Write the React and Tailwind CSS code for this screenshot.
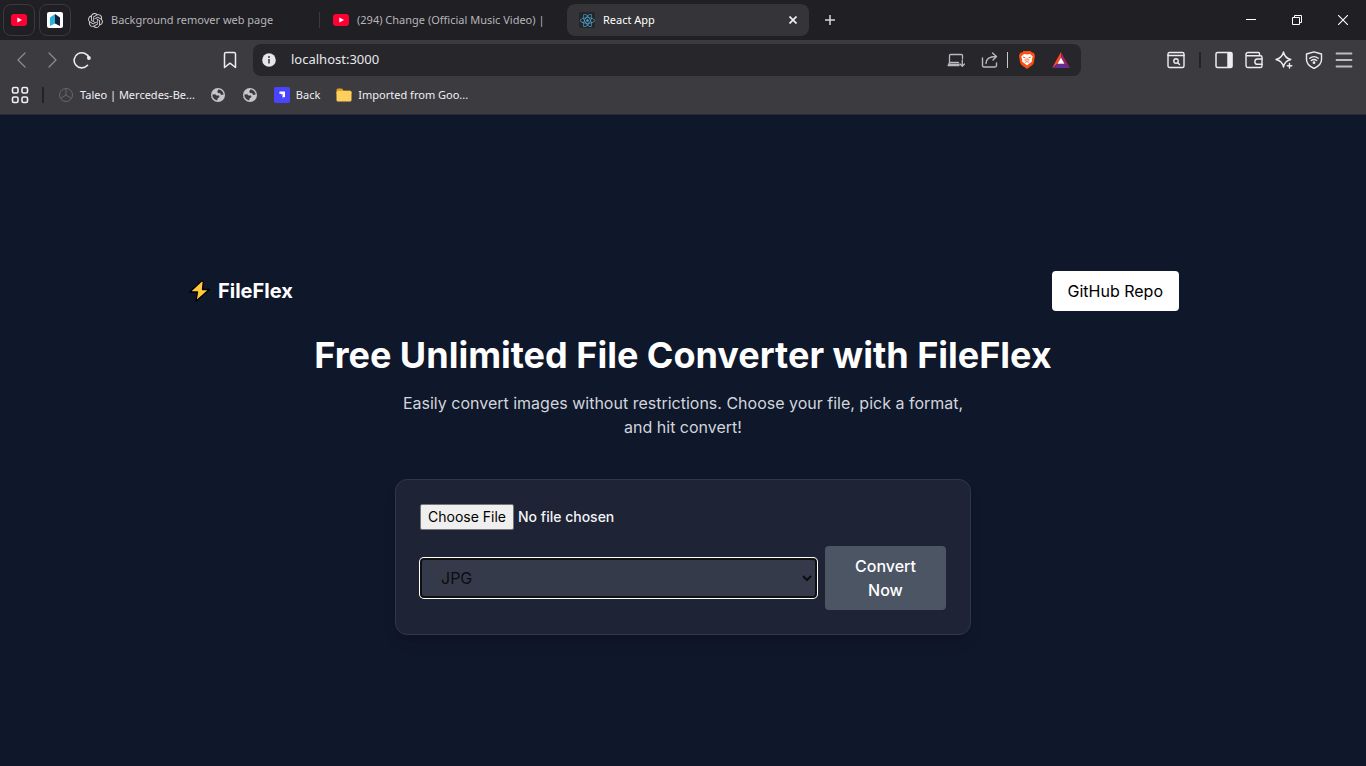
import React from "react";
import { SiOpenai } from "react-icons/si";
import { FaReact } from "react-icons/fa";

function YouTubeIcon() {
  return (
    <svg width="16" height="12" viewBox="0 0 16 12" className="shrink-0" aria-hidden="true">
      <rect width="16" height="12" rx="3" fill="#ff0033" />
      <path d="M6.3 3.4 11 6 6.3 8.6Z" fill="#fff" />
    </svg>
  );
}

function BookIcon() {
  return (
    <svg width="16" height="16" viewBox="0 0 16 16" aria-hidden="true">
      <rect width="16" height="16" rx="2" fill="#fff" />
      <path d="M3 5.5 8 2v9.5L3 14Z" fill="#27b4d8" />
      <path d="M8 2l5 3.5V14l-5-2.5Z" fill="#14213d" />
    </svg>
  );
}

function Stroke({ children, size = 18, width = 1.3, className = "" }) {
  return (
    <svg
      width={size}
      height={size}
      viewBox="0 0 18 18"
      fill="none"
      stroke="currentColor"
      strokeWidth={width}
      strokeLinecap="round"
      strokeLinejoin="round"
      className={className}
      aria-hidden="true"
    >
      {children}
    </svg>
  );
}

function GlobeIcon() {
  return (
    <svg width="14" height="14" viewBox="0 0 14 14" className="shrink-0" aria-hidden="true">
      <circle cx="7" cy="7" r="7" fill="#c4c7c9" />
      <path d="M7.6 1.3 6.2 3.6 7 5l2.200.3.9 1.600 2.600-.4C12.400 4 10.400 1.700 7.600 1.300Z" fill="#3c3b40" />
      <path d="M1.300 6.600c0 3 2 5.500 5 6l.3-2.200 1.900-1.300-.4-1.500-2.500-.2L4.200 6.200Z" fill="#3c3b40" />
    </svg>
  );
}

function ToolButton({ label, children, className = "text-[#ededf0]" }) {
  return (
    <button type="button" aria-label={label} className={`flex h-8 w-[30px] items-center justify-center ${className}`}>
      {children}
    </button>
  );
}

function TabStrip() {
  return (
    <div className="flex h-10 items-center bg-[#201f24] pl-[3px] text-[#b6b5ba]">
      <div className="flex gap-1">
        <button type="button" aria-label="YouTube" className="flex h-8 w-8 items-center justify-center rounded-lg border border-[#3a393e]">
          <YouTubeIcon />
        </button>
        <button type="button" aria-label="Docs" className="flex h-8 w-8 items-center justify-center rounded-lg border border-[#3a393e]">
          <BookIcon />
        </button>
      </div>
      <button type="button" className="flex h-8 w-[248px] items-center gap-2 pl-[17px] text-left">
        <SiOpenai size={15} color="#d0d0d3" className="shrink-0" />
        <span className="truncate">Background remover web page</span>
      </button>
      <div className="h-4 w-px bg-[#3a393e]" />
      <button type="button" className="flex h-8 w-[247px] items-center gap-2 pl-[13px] pr-3 text-left">
        <YouTubeIcon />
        <span className="whitespace-nowrap">(294) Change (Official Music Video) |</span>
      </button>
      <div className="flex h-8 w-[242px] items-center gap-2 rounded-lg bg-[#353438] px-3 text-white">
        <span className="flex h-4 w-4 items-center justify-center rounded-xs bg-[#23272a]">
          <FaReact size={15} color="#4fa3d1" />
        </span>
        <span className="flex-1">React App</span>
        <button type="button" aria-label="Close tab" className="flex h-4 w-2 items-center justify-center">
          <svg width="8" height="8" viewBox="0 0 8 8" className="shrink-0" stroke="#f0f0f2" strokeWidth="1.7" aria-hidden="true">
            <path d="M.5.5l7 7M7.500.5l-7 7" />
          </svg>
        </button>
      </div>
      <button type="button" aria-label="New tab" className="flex h-8 w-[42px] items-center justify-center">
        <svg width="10" height="10" viewBox="0 0 10 10" stroke="#d5d5d8" strokeWidth="1.500" aria-hidden="true">
          <path d="M5 0v10M0 5h10" />
        </svg>
      </button>
      <div className="ml-auto flex text-white">
        <button type="button" aria-label="Minimize" className="flex h-10 w-[46px] items-center justify-center">
          <svg width="10" height="10" viewBox="0 0 10 10" stroke="currentColor" aria-hidden="true">
            <path d="M0 4.500h10" />
          </svg>
        </button>
        <button type="button" aria-label="Restore" className="flex h-10 w-[46px] items-center justify-center">
          <svg width="10" height="10" viewBox="0 0 10 10" fill="none" stroke="currentColor" aria-hidden="true">
            <path d="M.5 2.500h7v7h-7ZM2.500 2.500v-2h7v7h-2" />
          </svg>
        </button>
        <button type="button" aria-label="Close" className="flex h-10 w-[46px] items-center justify-center">
          <svg width="10" height="10" viewBox="0 0 10 10" stroke="currentColor" strokeWidth="1.100" aria-hidden="true">
            <path d="M0 0l10 10M10 0 0 10" />
          </svg>
        </button>
      </div>
    </div>
  );
}

function Toolbar() {
  return (
    <div className="flex h-10 items-center">
      <div className="flex w-[253px] items-center pl-[7px] pr-2">
        <ToolButton label="Back" className="text-[#8b8a8f]">
          <Stroke><path d="M12 2 5 9l7 7" /></Stroke>
        </ToolButton>
        <ToolButton label="Forward" className="text-[#8b8a8f]">
          <Stroke><path d="M6 2l7 7-7 7" /></Stroke>
        </ToolButton>
        <ToolButton label="Reload">
          <Stroke width={1.6}>
            <path d="M14.500 14.300A7.600 7.600 0 1 1 16 7" />
            <circle cx="15.900" cy="7" r="1.900" fill="currentColor" stroke="none" />
          </Stroke>
        </ToolButton>
        <div className="flex-1" />
        <ToolButton label="Bookmark this page">
          <Stroke width={1.5}><path d="M5 1.500h8a1.500 1.500 0 0 1 1.500 1.500v13.500L9 12.200l-5.500 4.300V3A1.500 1.500 0 0 1 5 1.500Z" /></Stroke>
        </ToolButton>
      </div>
      <div className="flex h-8 min-w-0 flex-1 items-center rounded-lg bg-[#27262b] pl-[9px] pr-1">
        <button type="button" aria-label="Site information" className="shrink-0">
          <svg width="14" height="14" viewBox="0 0 14 14" aria-hidden="true">
            <circle cx="7" cy="7" r="6.800" fill="#e6e6ea" />
            <circle cx="7" cy="4" r=".9" fill="#27262b" />
            <path d="M7 6v4.500" stroke="#27262b" strokeWidth="1.400" />
          </svg>
        </button>
        <input
          aria-label="Address"
          defaultValue="localhost:3000"
          className="ml-[15px] min-w-0 flex-1 bg-transparent text-[13px] text-[#e8e8ec] outline-none"
        />
        <div className="flex items-center text-[#b9b8be]">
          <button type="button" aria-label="Install app" className="flex h-8 w-[34px] items-center justify-center">
            <Stroke width={1.3}>
              <path d="M12 13.500H1.500l1-2V4.500a1 1 0 0 1 1-1h11a1 1 0 0 1 1 1v3M1 14.500h11M2.500 11.500h9" />
              <path d="M15.300 9v6M13 13l2.300 2.200 2.200-2.200" />
            </Stroke>
          </button>
          <button type="button" aria-label="Share" className="flex h-8 w-[34px] items-center justify-center">
            <Stroke width={1.400}>
              <path d="M1.500 7v7.500a1.500 1.500 0 0 0 1.500 1.500h11a1.500 1.500 0 0 0 1.500-1.500V12" />
              <path d="M5 12.500c0-4 3-7 10-7M11.500 2 15.500 5.500 12 9" />
            </Stroke>
          </button>
          <div className="h-4 w-px bg-[#c8c8cc]" />
          <button type="button" aria-label="Brave Shields" className="flex h-8 w-[37px] items-center justify-center">
            <svg width="16" height="18" viewBox="0 0 16 18" aria-hidden="true">
              <path d="M4.500 0h7l1.500 1.500 1.800.3 1.200 3-1.200 7-1.300 2.200L8 18l-5.500-4-1.300-2.200L0 4.800l1.200-3L3 1.500Z" fill="#fb4f14" />
              <path d="M5 3 8 3.600l3-.6 2.800 2.600-1 3 .1 2L9.800 13 8 14.500 6.200 13l-3.100-2.400.1-2-1-3Z" fill="#fff" />
              <path d="M4 6l2.500.8M12 6l-2.500.8M8 7v2.500M6.200 8.200v1.600M9.800 8.200v1.600M6.200 11.300 8 10.500l1.800.8" fill="none" stroke="#fb4f14" strokeWidth=".9" />
            </svg>
          </button>
          <button type="button" aria-label="Brave Rewards" className="flex h-8 w-8 items-center justify-center">
            <svg width="18" height="16" viewBox="0 0 18 16" aria-hidden="true">
              <path d="M9 0v5.500L5.500 11.700 0 16Z" fill="#ff4724" />
              <path d="M9 0v5.500l3.500 6.200L18 16Z" fill="#9e1f63" />
              <path d="M0 16h18l-5.500-4.300h-7Z" fill="#662d91" />
              <path d="M9 5.500 12.500 11.700h-7Z" fill="#fff" />
            </svg>
          </button>
        </div>
      </div>
      <div className="flex w-[285px] items-center justify-end pr-[7px]">
        <ToolButton label="Search tabs">
          <Stroke width={1.4}>
            <rect x="1" y="1.500" width="16" height="15" rx="1.500" />
            <path d="M1 4.500h16" />
            <circle cx="9" cy="10" r="2.200" />
            <path d="m10.700 11.700 1.800 1.800" />
          </Stroke>
        </ToolButton>
        <div className="flex w-[18px] justify-center"><div className="h-4 w-[2px] bg-[#232227]" /></div>
        <ToolButton label="Sidebar">
          <Stroke width={1.5}>
            <rect x="1" y="1.500" width="16" height="15" rx="1.500" />
            <path d="M13 2h3.500v14H13Z" fill="currentColor" />
          </Stroke>
        </ToolButton>
        <ToolButton label="Wallet">
          <Stroke width={1.4}>
            <path d="M1 3.500a2 2 0 0 1 2-2h10.500a1 1 0 0 1 1 1v2M1 3.500a1.500 1.500 0 0 0 1.500 1.300h13A1.500 1.500 0 0 1 17 6.300V15a1.500 1.500 0 0 1-1.500 1.500H3A2 2 0 0 1 1 14.500Z" />
            <path d="M17 8h-4.500a2.500 2.500 0 0 0 0 5.300H17" />
          </Stroke>
        </ToolButton>
        <ToolButton label="Leo AI">
          <Stroke width={1.4}>
            <path d="M8.500 1c.9 4.500 2.700 6.400 7.300 7.500-4.600 1-6.400 3-7.300 7.500C7.500 11.500 5.600 9.500 1 8.500 5.600 7.400 7.500 5.500 8.500 1Z" />
            <path d="M14.500 12.500v4.500M12.300 14.800h4.500" />
          </Stroke>
        </ToolButton>
        <ToolButton label="VPN">
          <Stroke width={1.4}>
            <path d="M9 .8 16.500 3v5.500c0 4-2.800 6.800-7.500 9-4.700-2.200-7.500-5-7.500-9V3Z" />
            <path d="M4.800 7.300c2.500-2 5.900-2 8.400 0M6.300 9.500c1.700-1.300 3.700-1.300 5.400 0" />
            <circle cx="9" cy="11.700" r=".7" fill="currentColor" />
          </Stroke>
        </ToolButton>
        <ToolButton label="Menu" className="text-[#bdbcc1]">
          <Stroke width={1.8}><path d="M1.500 2.500h15M1.500 9h15M1.500 15.500h15" /></Stroke>
        </ToolButton>
      </div>
    </div>
  );
}

function BookmarksBar() {
  return (
    <div className="flex h-[34px] items-center pb-1 pl-[11px] text-[#f0f0f2]">
      <button type="button" aria-label="All bookmarks">
        <Stroke width={1.6}>
          <rect x="1.500" y="1.500" width="5.500" height="5.500" rx="1.500" />
          <rect x="11" y="1.500" width="5.500" height="5.500" rx="1.500" />
          <rect x="1.500" y="11" width="5.500" height="5.500" rx="1.500" />
          <rect x="11" y="11" width="5.500" height="5.500" rx="1.500" />
        </Stroke>
      </button>
      <div className="ml-[13px] h-4 w-[2px] bg-[#232227]" />
      <a href="#taleo" className="ml-[15px] flex items-center gap-[7px]">
        <svg width="14" height="14" viewBox="0 0 14 14" fill="none" stroke="#68676c" aria-hidden="true">
          <circle cx="7" cy="7" r="6.500" />
          <path d="M7 .5V7L1.500 10.500M7 7l5.500 3.500" />
        </svg>
        Taleo | Mercedes-Be...
      </a>
      <a href="#site-one" aria-label="Site one" className="ml-4"><GlobeIcon /></a>
      <a href="#site-two" aria-label="Site two" className="ml-[18px]"><GlobeIcon /></a>
      <a href="#back" className="ml-[17px] flex items-center gap-[6px]">
        <svg width="16" height="16" viewBox="0 0 16 16" aria-hidden="true">
          <rect width="16" height="16" rx="2" fill="#4945ff" />
          <path d="M5.500 4.500H11V10H8.500V7h-3Z" fill="#fff" />
          <path d="M5.500 4.500V7h3v3H11l-2.500 2V10" fill="#a5a3ff" opacity=".6" />
        </svg>
        Back
      </a>
      <a href="#imported" className="ml-4 flex items-center gap-[6px]">
        <svg width="16" height="14" viewBox="0 0 16 14" aria-hidden="true">
          <path d="M.5 2A1.500 1.500 0 0 1 2 .5h4L7.500 2.500H14A1.500 1.500 0 0 1 15.500 4v2H.5Z" fill="#dfa023" />
          <rect x=".5" y="3" width="15" height="10.500" rx="1.500" fill="#fdcf5b" />
        </svg>
        Imported from Goo...
      </a>
    </div>
  );
}

function Converter() {
  return (
    <main className="flex flex-1 flex-col items-center justify-center bg-[#0f172a] pt-6 font-['Inter','Liberation_Sans',sans-serif] text-white">
      <div className="w-full max-w-5xl px-4">
        <header className="flex items-center justify-between">
          <div className="flex items-center gap-2 pl-[2px] text-xl font-bold">
            <svg width="21" height="22" viewBox="0 0 21 22" aria-hidden="true">
              <path d="M12.800.8.800 12h7.700L7 21.200 20.200 9.500h-6.700L14.300 1.500Z" fill="#ffc83d" stroke="#000" strokeWidth="1.300" strokeLinejoin="round" />
            </svg>
            <span>FileFlex</span>
          </div>
          <a href="#github" className="rounded bg-white px-4 py-2 text-base text-black">GitHub Repo</a>
        </header>
        <h1 className="mt-6 text-center text-4xl font-bold">Free Unlimited File Converter with FileFlex</h1>
        <p className="mx-auto mt-4 max-w-xl text-center text-base text-gray-300">
          Easily convert images without restrictions. Choose your file, pick a format, and hit convert!
        </p>
        <form
          onSubmit={(e) => e.preventDefault()}
          className="mx-auto mt-10 flex max-w-xl flex-col gap-4 rounded-xl border border-[#30374a] bg-[#1e2335] p-6 shadow-lg"
        >
          <input
            type="file"
            aria-label="File to convert"
            className="block h-[26px] w-full text-sm font-medium text-gray-100 file:mr-1 file:h-[26px] file:rounded-xs file:border file:border-solid file:border-[#767676] file:bg-[#efefef] file:px-[7px] file:font-normal file:text-black"
          />
          <div className="flex items-center gap-2">
            <select
              aria-label="Output format"
              className="h-10 min-w-0 flex-1 rounded border-2 border-[#101010] bg-[#343a4a] pl-[15px] text-base text-[#0c0d10] ring-1 ring-white outline-none"
            >
              <option>JPG</option>
              <option>PNG</option>
              <option>WEBP</option>
            </select>
            <button type="submit" className="w-[121px] rounded bg-[#4b5563] px-6 py-2 text-base font-medium text-white">
              Convert Now
            </button>
          </div>
        </form>
      </div>
    </main>
  );
}

export default function App() {
  return (
    <div className="flex min-h-screen flex-col bg-[#0f172a]">
      <div className="border-b border-[#2b2a30] bg-[#3c3b40] font-['Noto_Sans','Open_Sans',sans-serif] text-[11px]">
        <TabStrip />
        <Toolbar />
        <BookmarksBar />
      </div>
      <Converter />
    </div>
  );
}
